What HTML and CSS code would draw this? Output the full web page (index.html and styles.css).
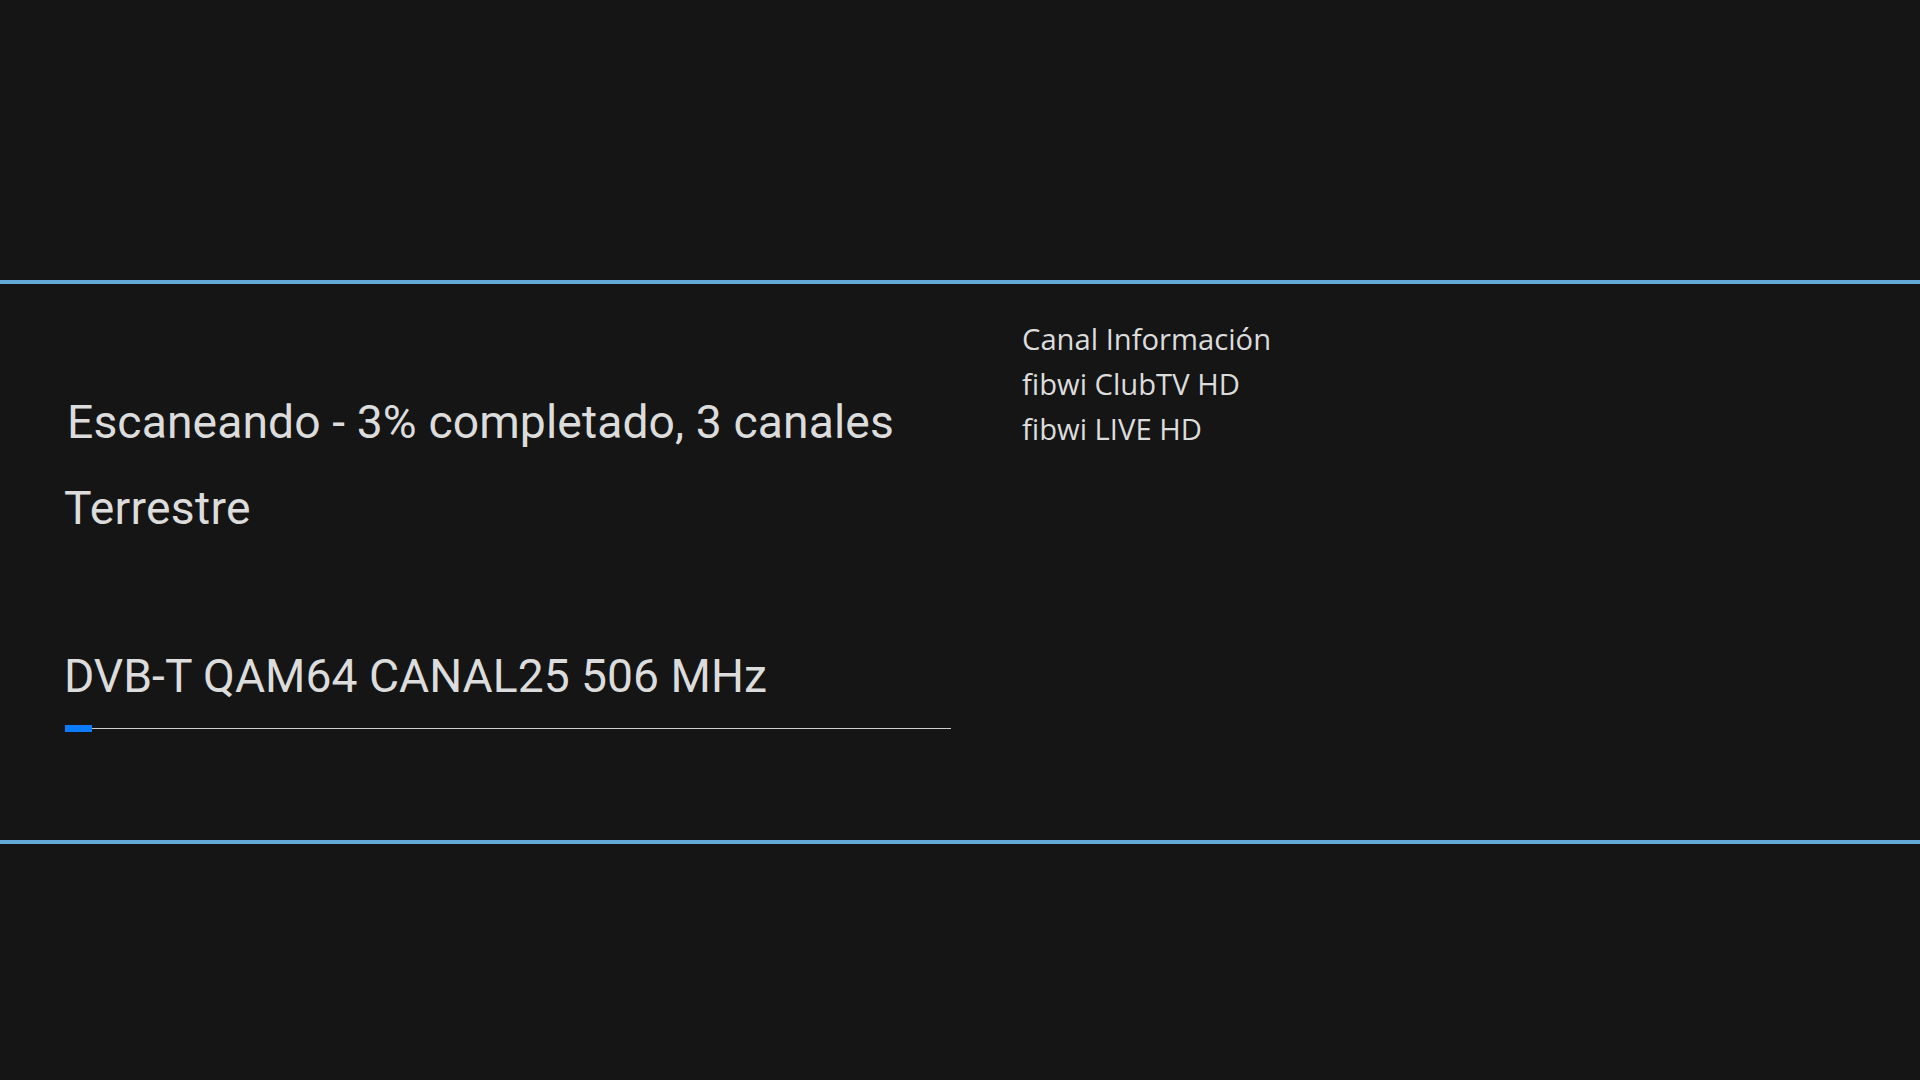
FILE: index.html
```html
<!DOCTYPE html>
<html lang="es">
<head>
<meta charset="utf-8">
<title>Escaneando</title>
<link rel="stylesheet" href="styles.css">
</head>
<body>
<div class="screen">
  <div class="top-band"></div>
  <div class="panel">
    <div class="left">
      <div class="status">Escaneando - 3% completado, 3 canales</div>
      <div class="source">Terrestre</div>
      <div class="freq">DVB-T QAM64 CANAL25 506 MHz</div>
      <div class="progress"><div class="progress-fill" style="width:27px"></div></div>
    </div>
    <div class="right">
      <div class="info-line">Canal Información</div>
      <div class="info-line">fibwi ClubTV HD</div>
      <div class="info-line">fibwi LIVE HD</div>
    </div>
  </div>
  <div class="bottom-band"></div>
</div>
</body>
</html>
```
FILE: styles.css
```css
html, body {
  margin: 0;
  padding: 0;
  background: #151515;
}
.screen {
  width: 1920px;
  height: 1080px;
  display: flex;
  flex-direction: column;
  background: #151515;
  color: #dcdcdc;
}
.top-band {
  height: 280px;
  flex: none;
}
.panel {
  height: 556px;
  flex: none;
  border-top: 4px solid #64a8d8;
  border-bottom: 4px solid #64a8d8;
  display: flex;
}
.bottom-band {
  flex: 1;
}
.left {
  width: 887px;
  margin-left: 64px;
  padding-top: 111px;
  font-family: Roboto, "Liberation Sans", sans-serif;
}
.status {
  font-size: 46.25px;
  line-height: 54px;
  padding-left: 3px;
  letter-spacing: 0.1px;
  white-space: nowrap;
}
.source {
  font-size: 46.25px;
  line-height: 54px;
  margin-top: 32px;
  letter-spacing: 0.3px;
}
.freq {
  font-size: 46.25px;
  line-height: 54px;
  margin-top: 114px;
}
.progress {
  position: relative;
  margin-top: 22px;
  margin-left: 1px;
  height: 7px;
}
.progress::before {
  content: "";
  position: absolute;
  left: 0;
  right: 0;
  top: 3px;
  height: 1px;
  background: #cfcfcf;
}
.progress-fill {
  position: relative;
  height: 7px;
  background: #0a7bff;
}
.right {
  margin-left: 71px;
  padding-top: 33px;
  font-family: "Open Sans", "Noto Sans", sans-serif;
  font-size: 29.2px;
  line-height: 45px;
}
.info-line {
  white-space: nowrap;
}
```
